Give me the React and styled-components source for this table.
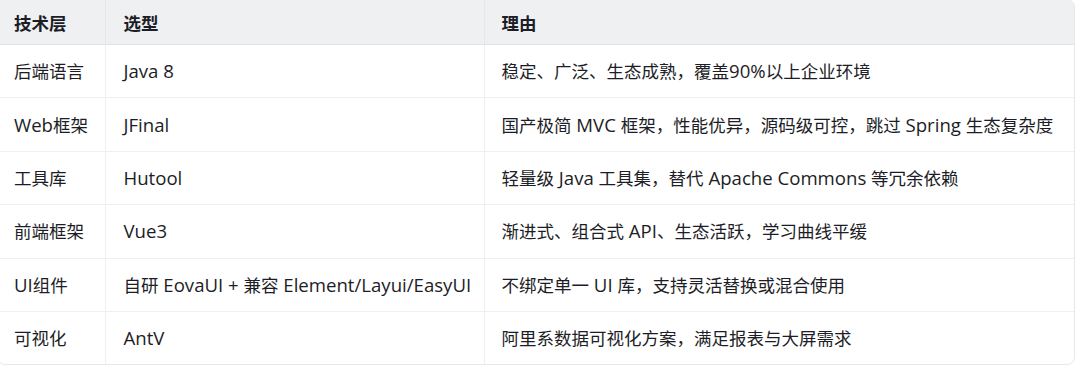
import styled, { createGlobalStyle } from "styled-components"

const GlobalStyle = createGlobalStyle`
    html, body {
        margin: 0;
        padding: 0;
        background: #ffffff;
    }
    body {
        font-family: "Open Sans", "Noto Sans CJK SC", sans-serif;
        overflow: hidden;
    }
`

const Moldura = styled.div`
    width: 1076px;
    margin: -1px 0 0 -3px;
    border: 1px solid #e6e7ea;
    border-radius: 8px;
    overflow: hidden;
`

const Tabela = styled.table`
    width: 100%;
    border-collapse: collapse;
    table-layout: fixed;
    color: #1c1d26;
    font-size: 17.5px;
`

const Cabecalho = styled.th`
    background: #eff0f2;
    text-align: left;
    font-weight: 700;
    height: 44px;
    padding: 0 0 0 ${({ $recuo }) => $recuo}px;
    border-left: ${({ $primeira }) => ($primeira ? "none" : "1px solid #e6e7ea")};
    border-bottom: 1px solid #e2e3e6;
`

const Celula = styled.td`
    height: 52.4px;
    padding: 0 0 0 ${({ $recuo }) => $recuo}px;
    line-height: 24px;
    white-space: nowrap;
    border-left: ${({ $primeira }) => ($primeira ? "none" : "1px solid #eeeff1")};
    border-top: 1px solid #eeeff1;
`

// o latim da captura é um pouco mais largo que o CJK
const Latino = styled.span`
    font-size: 18.6px;
`

const colunas = [107, 379, 590]

const linhas = [
    ["后端语言", "Java 8", "稳定、广泛、生态成熟，覆盖90%以上企业环境"],
    ["Web框架", "JFinal", "国产极简 MVC 框架，性能优异，源码级可控，跳过 Spring 生态复杂度"],
    ["工具库", "Hutool", "轻量级 Java 工具集，替代 Apache Commons 等冗余依赖"],
    ["前端框架", "Vue3", "渐进式、组合式 API、生态活跃，学习曲线平缓"],
    ["UI组件", "自研 EovaUI + 兼容 Element/Layui/EasyUI", "不绑定单一 UI 库，支持灵活替换或混合使用"],
    ["可视化", "AntV", "阿里系数据可视化方案，满足报表与大屏需求"],
]

const recuos = [16, 18, 17]

const Texto = ({ children }) =>
    children.split(/([A-Za-z0-9%/+ ]+)/).map((parte, i) =>
        i % 2 ? <Latino key={i}>{parte}</Latino> : parte
    )

const App = () => {
    return (
        <>
            <GlobalStyle />
            <Moldura>
                <Tabela>
                    <colgroup>
                        {colunas.map((largura, i) => (
                            <col key={i} style={{ width: largura }} />
                        ))}
                    </colgroup>
                    <thead>
                        <tr>
                            {["技术层", "选型", "理由"].map((titulo, i) => (
                                <Cabecalho key={titulo} $primeira={i === 0} $recuo={recuos[i]}>
                                    {titulo}
                                </Cabecalho>
                            ))}
                        </tr>
                    </thead>
                    <tbody>
                        {linhas.map((linha) => (
                            <tr key={linha[0]}>
                                {linha.map((texto, i) => (
                                    <Celula key={i} $primeira={i === 0} $recuo={recuos[i]}>
                                        <Texto>{texto}</Texto>
                                    </Celula>
                                ))}
                            </tr>
                        ))}
                    </tbody>
                </Tabela>
            </Moldura>
        </>
    )
}

export default App
